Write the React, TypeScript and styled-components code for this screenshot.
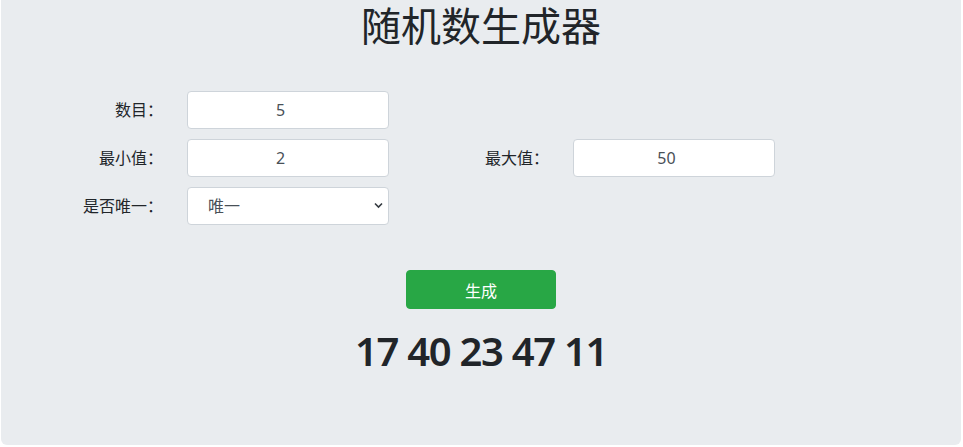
import React, { useState } from "react";
import styled, { createGlobalStyle } from "styled-components";

const GlobalStyle = createGlobalStyle`
  html, body {
    margin: 0;
    padding: 0;
    background: #ffffff;
  }
  body {
    font-family: "Noto Sans", "Noto Sans CJK SC", sans-serif;
    color: #212529;
  }
  * { box-sizing: border-box; }
`;

const Page = styled.div`
  padding: 0 2px 2px 1px;
`;

const Card = styled.main`
  width: 960px;
  height: 445px;
  background: #e9ecef;
  border-radius: 0 0 6px 6px;
  padding-top: 2px;
  display: flex;
  flex-direction: column;
`;

const Title = styled.h1`
  margin: 0;
  text-align: center;
  font-size: 40px;
  font-weight: 400;
  line-height: 48px;
  color: #212529;
`;

const Form = styled.div`
  margin-top: 41px;
  display: flex;
  flex-direction: column;
  gap: 10px;
`;

const Row = styled.div`
  display: grid;
  grid-template-columns: 162px 202px 136px 202px;
  grid-auto-rows: 38px;
  column-gap: 24px;
`;

const Label = styled.label`
  text-align: right;
  font-size: 16px;
  line-height: 38px;
  color: #212529;
`;

const Input = styled.input`
  width: 100%;
  height: 38px;
  padding: 6px 12px;
  border: 1px solid #ced4da;
  border-radius: 4px;
  background: #fff;
  color: #495057;
  font-family: inherit;
  font-size: 16px;
  text-align: center;
  outline: none;
`;

const SelectWrap = styled.div`
  position: relative;
  width: 100%;
  height: 38px;
`;

const Select = styled.select`
  width: 100%;
  height: 38px;
  padding: 6px 24px 6px 20px;
  border: 1px solid #ced4da;
  border-radius: 4px;
  background: #fff;
  color: #495057;
  font-family: inherit;
  font-size: 16px;
  appearance: none;
  -webkit-appearance: none;
  outline: none;
`;

const Chevron = styled.svg`
  position: absolute;
  right: 6px;
  top: 15px;
  width: 9px;
  height: 7px;
  pointer-events: none;
`;

const Button = styled.button`
  align-self: center;
  margin-top: 45px;
  width: 150px;
  height: 39px;
  border: 1px solid #28a745;
  border-radius: 4px;
  background: #28a745;
  color: #fff;
  font-family: inherit;
  font-size: 16px;
  cursor: pointer;
`;

const Result = styled.div`
  margin-top: 18px;
  text-align: center;
  font-size: 40px;
  font-weight: 600;
  letter-spacing: -1.3px;
  line-height: 48px;
  color: #212529;
`;

export default function App() {
  const [count, setCount] = useState("5");
  const [min, setMin] = useState("2");
  const [max, setMax] = useState("50");
  const [unique, setUnique] = useState("1");
  const [nums, setNums] = useState<number[]>([17, 40, 23, 47, 11]);

  const generate = () => {
    const n = parseInt(count, 10) || 0;
    const lo = parseInt(min, 10) || 0;
    const hi = parseInt(max, 10) || 0;
    const out: number[] = [];
    let guard = 0;
    while (out.length < n && guard < 10000) {
      guard++;
      const v = lo + Math.floor(Math.random() * (hi - lo + 1));
      if (unique === "1" && out.includes(v)) continue;
      out.push(v);
    }
    setNums(out);
  };

  return (
    <>
      <GlobalStyle />
      <Page>
        <Card>
          <Title>随机数生成器</Title>
          <Form>
            <Row>
              <Label>数目：</Label>
              <Input type="number" value={count} onChange={(e) => setCount(e.target.value)} />
            </Row>
            <Row>
              <Label>最小值：</Label>
              <Input type="number" value={min} onChange={(e) => setMin(e.target.value)} />
              <Label>最大值：</Label>
              <Input type="number" value={max} onChange={(e) => setMax(e.target.value)} />
            </Row>
            <Row>
              <Label>是否唯一：</Label>
              <SelectWrap>
                <Select value={unique} onChange={(e) => setUnique(e.target.value)}>
                  <option value="1">唯一</option>
                  <option value="0">不唯一</option>
                </Select>
                <Chevron viewBox="0 0 9 7">
                  <path d="M1 1.5 L4.5 5 L8 1.5" fill="none" stroke="#343a40" strokeWidth="1.6" />
                </Chevron>
              </SelectWrap>
            </Row>
          </Form>
          <Button onClick={generate}>生成</Button>
          <Result>{nums.join(" ")}</Result>
        </Card>
      </Page>
    </>
  );
}
